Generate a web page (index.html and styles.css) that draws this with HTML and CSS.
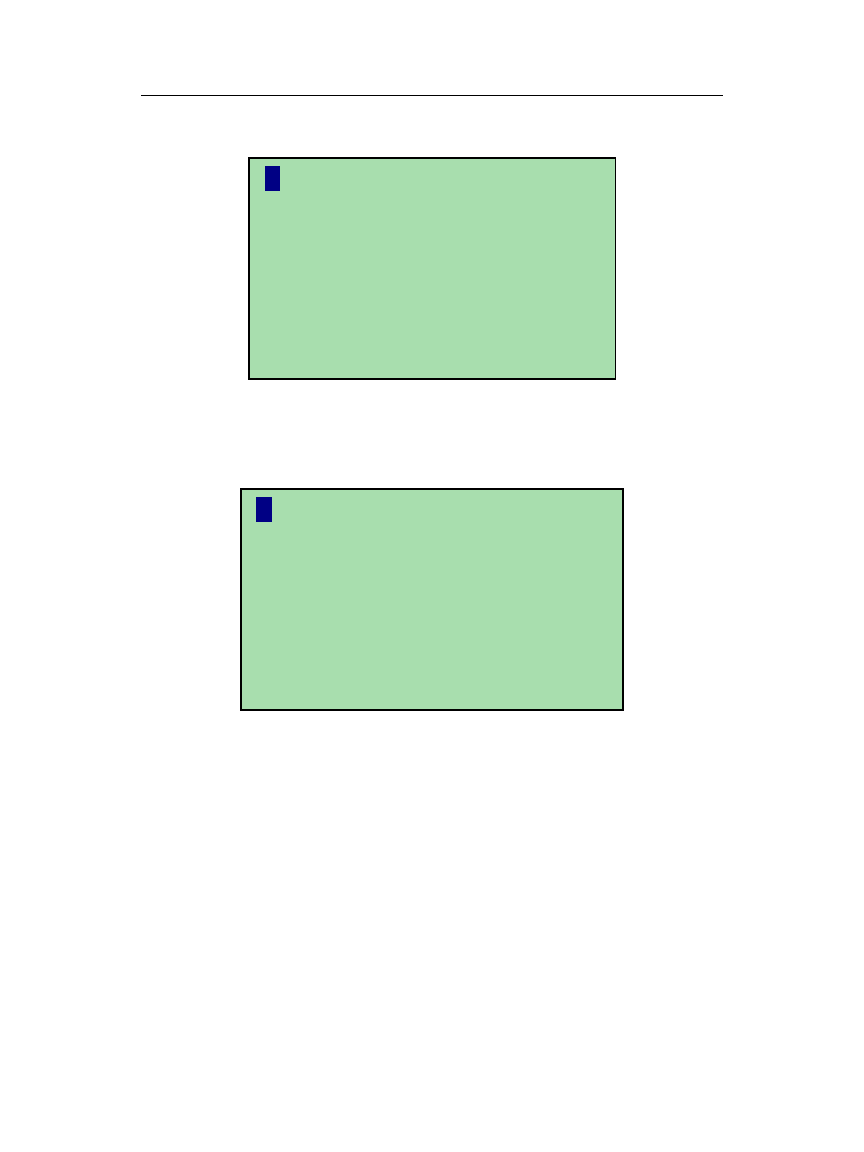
FILE: index.html
```html
<!DOCTYPE html>
<html lang="en">
<head>
    <meta charset="UTF-8">
    <meta name="viewport" content="width=device-width, initial-scale=1.0">
    <title>Display Screens</title>
    <link rel="stylesheet" href="styles.css">
</head>
<body>
    <main class="page">
        <hr class="rule">
        <section class="screen">
            <div class="cursor"></div>
        </section>
        <section class="screen screen-wide">
            <div class="cursor cursor-wide"></div>
        </section>
    </main>
</body>
</html>
```

FILE: styles.css
```css
body {
    margin: 0;
    background-color: #fff;
    font-family: "Liberation Sans", sans-serif;
}
.page {
    max-width: 582px;
    margin: 0 auto;
    padding: 95px 24px;
}
.rule {
    height: 1px;
    margin: 0 0 61px;
    border: none;
    background-color: #000;
}
.screen {
    box-sizing: border-box;
    max-width: 368px;
    min-height: 223px;
    margin: 0 auto 108px;
    padding: 7px 15px;
    border: 2px solid #000;
    border-right-width: 1px;
    background-color: #a8deae;
}
.screen-wide {
    max-width: 384px;
    padding: 7px 14px;
    border-right-width: 2px;
}
.cursor {
    width: 15px;
    height: 25px;
    background-color: #000084;
}
.cursor-wide {
    width: 16px;
}
```
